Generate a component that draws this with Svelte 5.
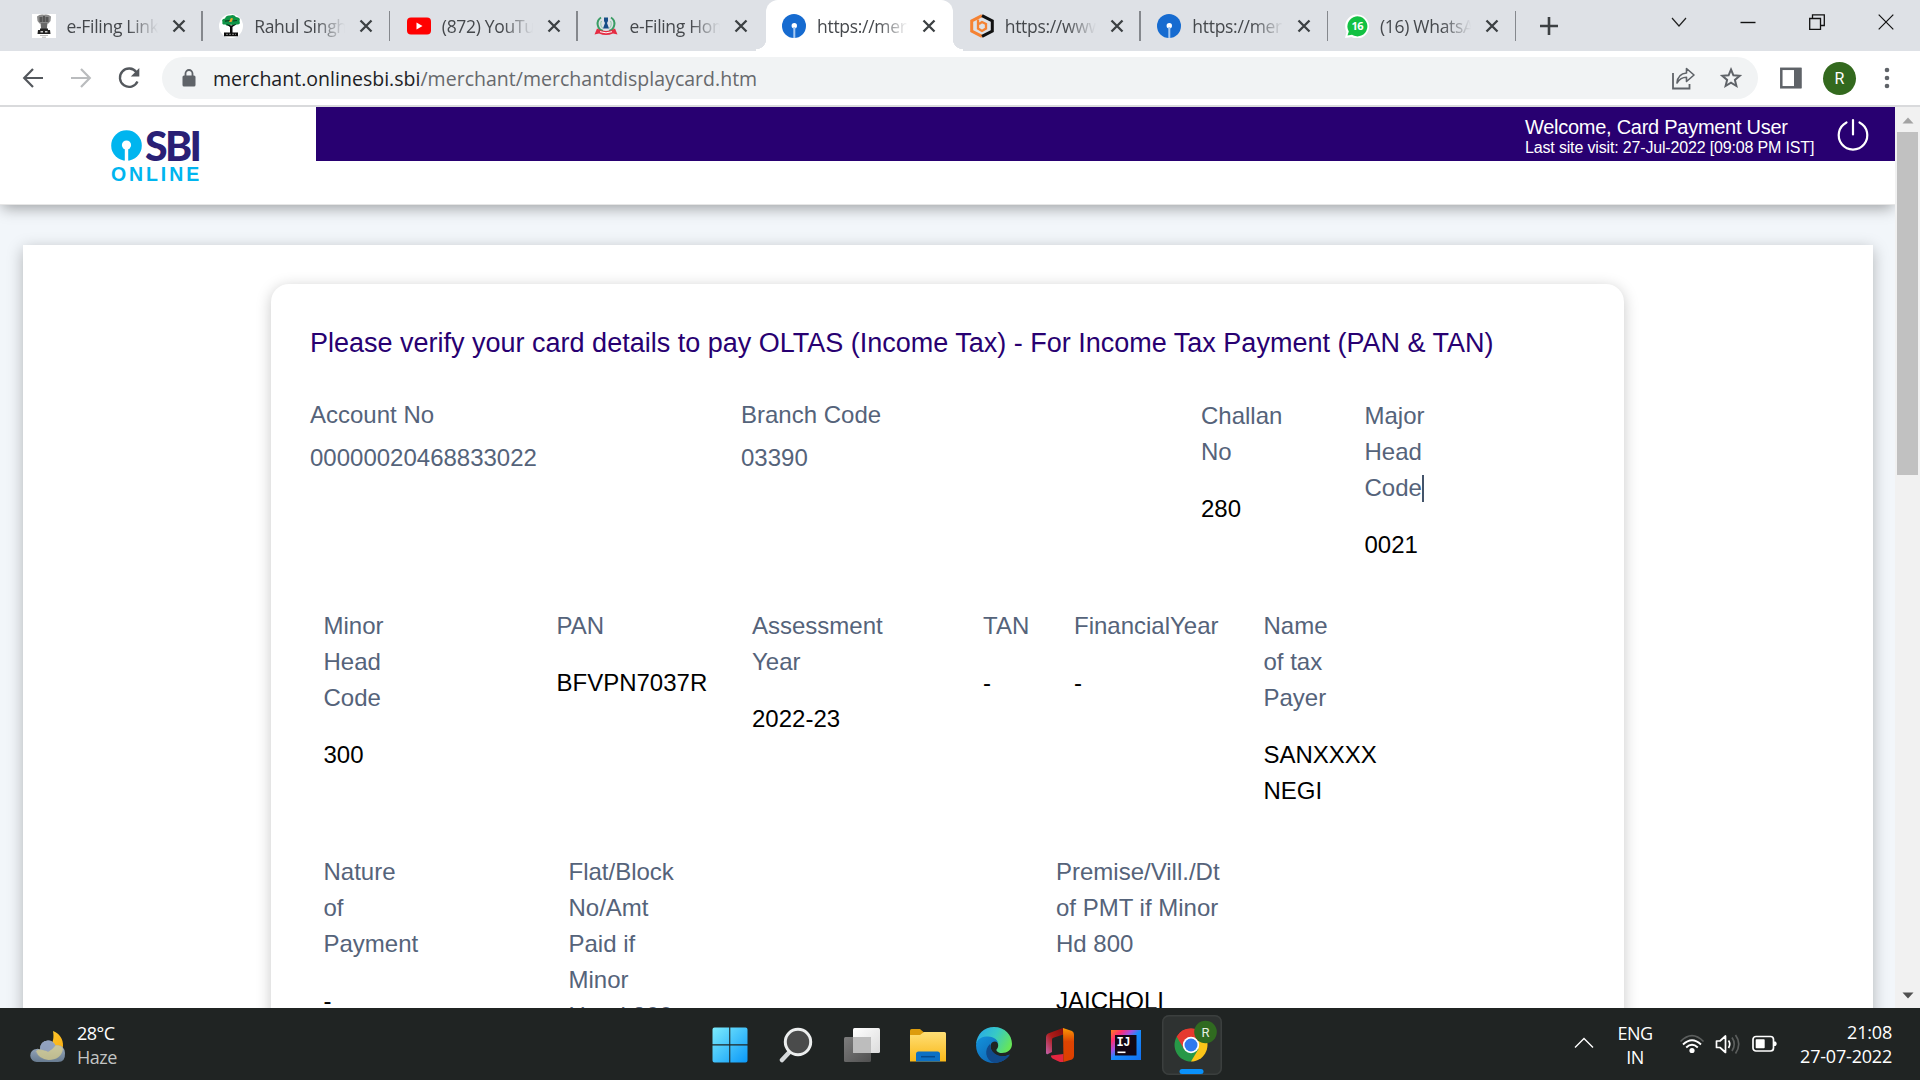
<script>
  const tabs = [
    { icon: 'emblem', title: 'e-Filing Link | In', sep: true },
    { icon: 'tree', title: 'Rahul Singh N', sep: true },
    { icon: 'youtube', title: '(872) YouTube', sep: true },
    { icon: 'tax', title: 'e-Filing Home', sep: true, hideSep: true },
    { icon: 'sbi', title: 'https://merchant', active: true },
    { icon: 'bd', title: 'https://www.bi', sep: true },
    { icon: 'sbi', title: 'https://merchant', sep: true },
    { icon: 'whatsapp', title: '(16) WhatsApp', sep: true }
  ];

  const rowTwo = [
    { label: ['Minor', 'Head', 'Code'], value: ['300'] },
    { label: ['PAN'], value: ['BFVPN7037R'] },
    { label: ['Assessment', 'Year'], value: ['2022-23'] },
    { label: ['TAN'], value: ['-'] },
    { label: ['FinancialYear'], value: ['-'] },
    { label: ['Name', 'of tax', 'Payer'], value: ['SANXXXX', 'NEGI'] }
  ];

  const rowThree = [
    { label: ['Nature', 'of', 'Payment'], value: ['-'] },
    { label: ['Flat/Block', 'No/Amt', 'Paid if', 'Minor', 'Head 800'], value: [] },
    { label: ['Premise/Vill./Dt', 'of PMT if Minor', 'Hd 800'], value: ['JAICHOLI'] }
  ];
</script>

{#snippet favicon(name)}
  <svg class="fav" width="24" height="24" viewBox="0 0 24 24">
    {#if name === 'emblem'}
      <rect width="24" height="24" fill="#fff" />
      <path d="M5 2.500Q8 0 12 .8Q16 0 19 2.500L18.500 7L16.500 9.500H7.500L5.500 7Z" fill="#8b8b8b" />
      <path d="M7.500 3h3v5h-3zM13.500 3h3v5h-3zM11 2h2v6h-2z" fill="#555" />
      <path d="M8.500 9h7l-.7 6h-5.600z" fill="#6a6a6a" />
      <path d="M8 14.500h8v1.500h2l.5 4H5.500l.5-4h2z" fill="#222" />
      <path d="M8.500 17h2.500v1.500H8.500zM13 17h2.500v1.500H13z" fill="#ccc" />
      <path d="M8 21.500h8M10 23.200h4" stroke="#bbb" stroke-width="1" />
    {:else if name === 'tree'}
      <circle cx="12" cy="12" r="12" fill="#fff" />
      <path d="M3.500 8Q2 5 6 4.500Q7 1 11 1.500Q15 0 17 3Q22 3.500 20.500 7Q22 11 17.500 10.500Q15 12.500 12 10.500Q8 13 6.500 10.500Q2.500 11 3.500 8Z" fill="#109447" />
      <path d="M6 7.200L11 6.500M14 7L18 6.500" stroke="#0b3a1e" stroke-width="1.200" />
      <path d="M10 8L12 4L14 4.500L12.500 8Z" fill="#f6a42b" />
      <path d="M7 10L11 13V18.500H5V22.300h14V18.500H13.500V13L17.500 10L12.300 11.500Z" fill="#0b0b0b" />
      <path d="M7 20.300h10" stroke="#888" stroke-width="1" stroke-dasharray="2 1" />
    {:else if name === 'youtube'}
      <rect x="0" y="3.500" width="24" height="17" rx="4" fill="#f00" />
      <path d="M9.500 8.500L15.500 12L9.500 15.500Z" fill="#fff" />
    {:else if name === 'tax'}
      <path d="M7 3.500C1.500 7 3 15 9 17M17 3.500C22.500 7 21 15 15 17" fill="none" stroke="#3a9c64" stroke-width="2" />
      <path d="M7.500 7C6 10 7 13 9 14.500M16.500 7C18 10 17 13 15 14.500" fill="none" stroke="#8cc9a6" stroke-width="1" />
      <path d="M10 3.500h4v3.500l-1 2l2 5.500H9l2-5.500l-1-2z" fill="#174e87" />
      <path d="M3 14.500Q12 19.500 21 14.500L23.500 20.500L19 19.500Q12 22.500 5 19.500L.5 20.500Z" fill="#e52c43" />
      <path d="M6 17.700Q12 20 18 17.700" fill="none" stroke="#fff" stroke-width="1" />
    {:else if name === 'sbi'}
      <circle cx="12" cy="12" r="12" fill="#166bd0" />
      <circle cx="12.300" cy="11.800" r="2.700" fill="#fff" />
      <path d="M11.300 13h2v11h-2z" fill="#a8caf2" />
    {:else if name === 'bd'}
      <path d="M12 1.600L1.700 6.800V17.200L12 22.400" fill="none" stroke="#f58233" stroke-width="3" />
      <path d="M12 1.600L22.300 6.800V17.200L12 22.400" fill="none" stroke="#111" stroke-width="3" />
      <path d="M8 5.500V14.500L12 17L16 14.500V10L12 8L9 10" fill="none" stroke="#f58233" stroke-width="2.300" />
    {:else if name === 'whatsapp'}
      <path d="M0 24L1.500 18A12 12 0 1 1 6.500 23Z" fill="#fff" />
      <path d="M2.500 21.500L3.800 17.500A10 10 0 1 1 7 20.800Z" fill="#12c143" />
      <text x="12.300" y="16" text-anchor="middle" class="wa">16</text>
    {/if}
  </svg>
{/snippet}

{#snippet field(f)}
  <div class="field">
    <div class="label">{#each f.label as line}<div>{line}</div>{/each}</div>
    <div class="value">{#each f.value as line}<div>{line}</div>{/each}</div>
  </div>
{/snippet}

<div class="screen">
  <div class="tabstrip">
    {#each tabs as t}
      <div class="tab" class:active={t.active} class:sep={t.sep && !t.hideSep}>
        {@render favicon(t.icon)}
        <span class="tab-title">{t.title}</span>
        <svg class="x" width="14" height="14" viewBox="0 0 14 14"><path d="M1.500 1.500L12.500 12.500M12.500 1.500L1.500 12.500" stroke="#3c4043" stroke-width="2.300" /></svg>
      </div>
    {/each}
    <svg class="plus" width="20" height="20" viewBox="0 0 20 20"><path d="M10 1V19M1 10H19" stroke="#3c4043" stroke-width="2.600" /></svg>
    <div class="winbtns">
      <svg width="16" height="16" viewBox="0 0 16 16"><path d="M1 4L8 12L15 4" fill="none" stroke="#222" stroke-width="1.200" /></svg>
      <svg width="16" height="16" viewBox="0 0 16 16"><path d="M.5 8.500H15.500" stroke="#111" stroke-width="1.400" /></svg>
      <svg width="16" height="16" viewBox="0 0 16 16"><path d="M.7 4.500H11.500V15.300H.7ZM3.500 4.500V.8H15.300V11.500H11.500" fill="none" stroke="#111" stroke-width="1.300" /></svg>
      <svg width="16" height="16" viewBox="0 0 16 16"><path d="M.7 .7L15.300 15.300M15.300 .7L.7 15.300" stroke="#111" stroke-width="1.200" /></svg>
    </div>
  </div>

  <div class="toolbar">
    <div class="nav">
      <svg width="24" height="24" viewBox="0 0 24 24"><path d="M22 12H4M12 3L3.200 12L12 21" fill="none" stroke="#54585d" stroke-width="2.200" /></svg>
      <svg width="24" height="24" viewBox="0 0 24 24"><path d="M2 12H20M12 3L20.800 12L12 21" fill="none" stroke="#babcbe" stroke-width="2.200" /></svg>
      <svg width="24" height="24" viewBox="0 0 24 24"><path d="M19.500 6.200A9.200 9.200 0 1 0 20.500 15.500" fill="none" stroke="#54585d" stroke-width="2.300" /><path d="M22.300 2V10.500H13.800Z" fill="#54585d" /></svg>
    </div>
    <div class="omnibox">
      <svg width="14" height="18" viewBox="0 0 14 18"><path d="M3.500 8V4.500a3.500 3.500 0 0 1 7 0V8" fill="none" stroke="#5f6368" stroke-width="1.800" /><rect x="0.500" y="6.500" width="13" height="11" rx="1.500" fill="#5f6368" /></svg>
      <span class="url"><b>merchant.onlinesbi.sbi</b>/merchant/merchantdisplaycard.htm</span>
      <div class="omni-icons">
        <svg width="24" height="24" viewBox="0 0 24 24"><path d="M2 7V22.500H18.500V18" fill="none" stroke="#5f6368" stroke-width="1.800" /><path d="M6 17C6.500 10.500 10 7.500 15.500 7V2.500L23 9L15.500 15.500V11.300C11 11.300 8.500 13 6 17Z" fill="none" stroke="#5f6368" stroke-width="1.600" stroke-linejoin="round" /></svg>
        <svg width="24" height="24" viewBox="0 0 24 24"><path d="M12 3.500L14.400 9.300L20.700 9.800L15.900 13.900L17.400 20L12 16.700L6.600 20L8.100 13.900L3.300 9.800L9.600 9.300Z" fill="none" stroke="#5f6368" stroke-width="2" /></svg>
      </div>
    </div>
    <svg class="side" width="22" height="22" viewBox="0 0 22 22"><rect x="1.300" y="1.800" width="19" height="18.500" fill="none" stroke="#5f6368" stroke-width="2.500" /><rect x="14" y="1" width="7.500" height="20" fill="#5f6368" /></svg>
    <div class="avatar">R</div>
    <svg class="dots" width="6" height="22" viewBox="0 0 6 22"><circle cx="3" cy="3" r="2.300" fill="#5f6368" /><circle cx="3" cy="11" r="2.300" fill="#5f6368" /><circle cx="3" cy="19" r="2.300" fill="#5f6368" /></svg>
  </div>

  <div class="viewport">
    <div class="page">
      <header>
        <div class="logo">
          <div class="logo-top">
            <svg width="31" height="31" viewBox="0 0 31 31"><circle cx="15.500" cy="15.500" r="15.300" fill="#00b5ef" /><circle cx="15.500" cy="15" r="4.600" fill="#fff" /><rect x="13.800" y="17" width="3.400" height="14" fill="#fff" /></svg>
            <span class="sbi">SBI</span>
          </div>
          <span class="online">ONLINE</span>
        </div>
        <div class="band">
          <div class="user">
            <div class="welcome">Welcome, Card Payment User</div>
            <div class="last">Last site visit: 27-Jul-2022 [09:08 PM IST]</div>
          </div>
          <svg width="34" height="34" viewBox="0 0 34 34"><path d="M10.500 4.500A14.300 14.300 0 1 0 23.500 4.500" fill="none" stroke="#fff" stroke-width="2.200" stroke-linecap="round" /><path d="M17 2V16.500" stroke="#fff" stroke-width="2.200" stroke-linecap="round" /></svg>
        </div>
      </header>
      <main>
        <section class="card">
          <h1>Please verify your card details to pay OLTAS (Income Tax) - For Income Tax Payment (PAN &amp; TAN)</h1>
          <div class="row one">
            <div class="plain"><div>Account No</div><div>00000020468833022</div></div>
            <div class="plain"><div>Branch Code</div><div>03390</div></div>
            {@render field({ label: ['Challan', 'No'], value: ['280'] })}
            <div class="field">
              <div class="label"><div>Major</div><div>Head</div><div class="caret-line">Code<i></i></div></div>
              <div class="value">0021</div>
            </div>
          </div>
          <div class="row two">{#each rowTwo as f}{@render field(f)}{/each}</div>
          <div class="row three">{#each rowThree as f}{@render field(f)}{/each}</div>
        </section>
      </main>
    </div>
    <div class="scrollbar">
      <svg width="12" height="7" viewBox="0 0 12 7"><path d="M6 .5L11.500 6.500H.5Z" fill="#a3a3a3" /></svg>
      <div class="thumb"></div>
      <svg class="down" width="12" height="7" viewBox="0 0 12 7"><path d="M6 6.500L11.500 .5H.5Z" fill="#505050" /></svg>
    </div>
  </div>

  <div class="taskbar">
    <div class="weather">
      <svg width="36" height="34" viewBox="0 0 36 34">
        <defs>
          <linearGradient id="cl" x1="0" y1="0" x2="0" y2="1"><stop offset="0" stop-color="#b5c5dc" /><stop offset="1" stop-color="#6d8298" /></linearGradient>
          <linearGradient id="mn" x1="0" y1="0" x2="1" y2="1"><stop offset="0" stop-color="#ffd43a" /><stop offset="1" stop-color="#f9a60a" /></linearGradient>
        </defs>
        <path d="M23 1C29 3 33.500 9 33 16C32 25 25 30 18 30C12 30 7 26 5 21C14 24 26 17 23 1Z" fill="url(#mn)" />
        <path d="M7 32A6.500 6.500 0 0 1 6.500 19Q8 18.500 10 19.500Q10 11 18 10.500Q23 10.500 25.500 15.500Q34 14 35 23Q35.500 32 28 32Z" fill="url(#cl)" opacity=".93" />
        <path d="M6 21Q9 18 13 20Q20 23 25 15.500Q31 15 33 19Q31 30 18.500 30Q9 29 6 21Z" fill="#d9ce8d" opacity=".7" />
        <path d="M10 19.500Q10 11 18 10.500Q23 10.500 25.500 15.500Q22 20 18 22Q14 18.500 10 19.500Z" fill="#8e9fbd" opacity=".85" />
      </svg>
      <div class="wtext"><div>28°C</div><div class="dim">Haze</div></div>
    </div>

    <div class="apps">
      <div class="app"><svg width="36" height="36" viewBox="0 0 36 36">
        <defs><linearGradient id="wn" x1="0" y1="0" x2="1" y2="1"><stop offset="0" stop-color="#7cecfd" /><stop offset="1" stop-color="#0a98f8" /></linearGradient></defs>
        <path d="M2.500 .5H17.200V17.200H.5V2.500Q.5 .5 2.500 .5ZM18.300 .5H33.500Q35.500 .5 35.500 2.500V17.200H18.300ZM.5 18.600H17.200V35.500H2.500Q.5 35.500 .5 33.500ZM18.300 18.600H35.500V33.500Q35.500 35.500 33.500 35.500H18.300Z" fill="url(#wn)" /></svg></div>
      <div class="app"><svg width="36" height="36" viewBox="0 0 36 36"><path d="M11.500 25L4 33" stroke="#d5d8da" stroke-width="4.500" stroke-linecap="round" /><circle cx="20" cy="15" r="12.700" fill="#4a4b4b" stroke="#eceeee" stroke-width="3" /></svg></div>
      <div class="app"><svg width="36" height="36" viewBox="0 0 36 36">
        <defs><linearGradient id="tv" x1="0" y1="0" x2="1" y2="1"><stop offset="0" stop-color="#fff" /><stop offset="1" stop-color="#dcdcdc" /></linearGradient><linearGradient id="tg" x1="0" y1="0" x2="1" y2="1"><stop offset="0" stop-color="#7d7d7d" /><stop offset="1" stop-color="#505050" /></linearGradient></defs>
        <rect x="0" y="10" width="27" height="25" rx="1.500" fill="url(#tg)" /><rect x="9" y="1" width="27" height="25" rx="1.500" fill="url(#tv)" /><path d="M9 10H27V26H10.500Q9 26 9 24.500Z" fill="#bdbdbd" /></svg></div>
      <div class="app"><svg width="36" height="36" viewBox="0 0 36 36">
        <defs><linearGradient id="fo" x1="0" y1="0" x2="0" y2="1"><stop offset="0" stop-color="#ffdf76" /><stop offset="1" stop-color="#f9b818" /></linearGradient></defs>
        <path d="M1.500 2H10L14 5.500V12H0V3.500Q0 2 1.500 2Z" fill="#dd9c0d" /><path d="M0 8H10L14 5H34.500Q36 5 36 6.500V34.500H0Z" fill="url(#fo)" /><path d="M6 34.500V27Q6 24.500 8.500 24.500H27.500Q30 24.500 30 27V34.500Z" fill="#0d71c4" /><path d="M11 29.700H25" stroke="#064a8c" stroke-width="1.500" /></svg></div>
      <div class="app"><svg width="36" height="36" viewBox="0 0 36 36">
        <defs><linearGradient id="e1" x1="0" y1=".2" x2="1" y2=".6"><stop offset="0" stop-color="#27a9ea" /><stop offset=".5" stop-color="#37c9c6" /><stop offset="1" stop-color="#67e657" /></linearGradient><linearGradient id="e2" x1="0" y1="0" x2="1" y2="1"><stop offset="0" stop-color="#1393dc" /><stop offset="1" stop-color="#0e59a8" /></linearGradient></defs>
        <path d="M0 17C1 7 8 0 18 0C29 0 36 8 36 17C36 23 31 26 26 26C22 26 20 24 20.500 22.500C22 21 22.500 19 22 17C20 9 8 8 0 17Z" fill="url(#e1)" />
        <path d="M0 18C1 11 7 9.500 12 9.500C18 9.500 22.500 13.500 22.500 18C22.500 15 19 13.500 16 15.500C13 18 14 27 24 29.500C29 30 32 28 33.500 27.500C31 32 25 36 18 36C8 36 0 29 0 18Z" fill="url(#e2)" />
        <path d="M14 17C8 22 9 33 18 36C25 36 31 32 34 27.500C29 30.500 20 29.500 16.500 24.500C15 22 14 20 14 17Z" fill="#114a8b" /></svg></div>
      <div class="app"><svg width="36" height="36" viewBox="0 0 36 36">
        <defs><linearGradient id="of" x1="0" y1="1" x2="1" y2="0"><stop offset="0" stop-color="#c563ae" /><stop offset=".5" stop-color="#ad1c18" /><stop offset="1" stop-color="#840d0d" /></linearGradient><linearGradient id="og" x1="0" y1="0" x2="0" y2="1"><stop offset="0" stop-color="#fb9905" /><stop offset=".4" stop-color="#dd4402" /><stop offset="1" stop-color="#dd3f00" /></linearGradient></defs>
        <path d="M21 1L6 6.500Q4 7.500 4 10V25.500Q4 28 6 27L10 25V12.500Q10 11 12 10.500L21.500 7.500Z" fill="url(#of)" /><path d="M9 28.500L21.500 27V35L18 35Q15 33.500 10.500 31.500Q8.500 30 9 28.500Z" fill="#e42640" /><path d="M21 1L30 4Q32 5 32 7.500V29Q32 31.500 30 32.500L21.500 35Z" fill="url(#og)" /></svg></div>
      <div class="app"><svg width="36" height="36" viewBox="0 0 36 36">
        <defs><linearGradient id="ij" x1="0" y1="0" x2="1" y2="1"><stop offset="0" stop-color="#fc801d" /><stop offset=".2" stop-color="#fe2d72" /><stop offset=".36" stop-color="#a64fe0" /><stop offset=".5" stop-color="#188cfb" /><stop offset="1" stop-color="#136ff0" /></linearGradient></defs>
        <rect x="3" y="3" width="30" height="30" fill="url(#ij)" /><rect x="7" y="8" width="21.500" height="20.500" fill="#120714" /><text x="8.500" y="18.500" class="ijt">IJ</text><path d="M9.500 25.300H17.500" stroke="#fff" stroke-width="1.600" /></svg></div>
      <div class="app chrome"><svg width="60" height="60" viewBox="0 0 60 60">
        <path d="M29 30L14.700 21.800A16.500 16.500 0 0 1 43.300 21.800L36 25Z" fill="#e53a2f" />
        <path d="M29 30L43.300 21.800A16.500 16.500 0 0 1 29 46.500L27 40Z" fill="#fcc519" />
        <path d="M29 30L36.500 34L29 46.500A16.500 16.500 0 0 1 14.700 21.800L20 24Z" fill="#279847" />
        <path d="M29 22H43.400A16.500 16.500 0 0 0 14.700 21.800L22 34Z" fill="#e53a2f" />
        <circle cx="29" cy="30" r="8.200" fill="#fff" /><circle cx="29" cy="30" r="6.500" fill="#3079ee" />
        <circle cx="43.500" cy="17" r="11.300" fill="#306a20" /><text x="43.500" y="21.700" text-anchor="middle" class="rt">R</text>
        <rect x="17.500" y="54" width="24" height="5" rx="2.500" fill="#0a91fa" /></svg></div>
    </div>

    <div class="tray">
      <svg class="chev" width="20" height="12" viewBox="0 0 20 12"><path d="M1 10.500L10 1.500L19 10.500" fill="none" stroke="#fff" stroke-width="1.400" /></svg>
      <div class="lang"><div>ENG</div><div>IN</div></div>
      <svg class="wifi" width="26" height="22" viewBox="0 0 26 22"><path d="M1.500 8.500Q13 -3 24.500 8.500" fill="none" stroke="#5b5e5d" stroke-width="1.700" /><path d="M4 11.500Q13 3 22 11.500M7.200 14.500Q13 9 18.800 14.500" fill="none" stroke="#fff" stroke-width="1.900" /><circle cx="13" cy="17.500" r="2.600" fill="#fff" /></svg>
      <svg class="spk" width="26" height="22" viewBox="0 0 26 22"><path d="M1.500 8H5L10.500 3V19.500L5 14.500H1.500Z" fill="none" stroke="#fff" stroke-width="1.700" stroke-linejoin="round" /><path d="M13.500 7.500Q16 11 13.500 15" fill="none" stroke="#fff" stroke-width="1.700" /><path d="M17 4.500Q21.500 11 17 18M20.500 2Q27 11 20.500 20.500" fill="none" stroke="#5b5e5d" stroke-width="1.700" /></svg>
      <svg class="bat" width="26" height="18" viewBox="0 0 26 18"><rect x="1" y="1.500" width="20.500" height="14.500" rx="3" fill="none" stroke="#fff" stroke-width="1.700" /><rect x="3.700" y="4.300" width="9" height="9" rx=".8" fill="#fff" /><path d="M22 6.500H23.500Q24.700 7.500 24.700 8.800Q24.700 10 23.500 11H22Z" fill="#fff" /></svg>
      <div class="clock"><div>21:08</div><div>27-07-2022</div></div>
    </div>
  </div>
</div>

<style>
  :global(body) { margin: 0; overflow: hidden; }
  * { box-sizing: border-box; }
  .screen { width: 1920px; height: 1080px; overflow: hidden; display: flex; flex-direction: column; font-family: "Liberation Sans", Arial, sans-serif; background: #fff; }
  svg { display: block; flex: none; }

  .tabstrip { flex: none; height: 51px; background: #dee1e6; display: flex; align-items: center; padding-left: 15px; }
  .tab { position: relative; width: 187.650px; height: 51px; display: flex; align-items: center; padding-left: 16.500px; flex: none; }
  .tab.active { background: #fff; border-radius: 12px 12px 0 0; }
  .tab.active::before, .tab.active::after { content: ""; position: absolute; bottom: 0; width: 10px; height: 12px; }
  .tab.active::before { left: -10px; background: radial-gradient(circle at 0 0, transparent 10px, #fff 10.500px); }
  .tab.active::after { right: -10px; background: radial-gradient(circle at 100% 0, transparent 10px, #fff 10.500px); }
  .tab.sep::after { content: ""; position: absolute; right: 0; top: 11px; width: 1.500px; height: 30px; background: #85888d; }
  .tab-title { margin-left: 11px; width: 93px; overflow: hidden; white-space: nowrap; font: 17.500px/26px "Open Sans", "Noto Sans", sans-serif; letter-spacing: -0.300px; color: #45484c; -webkit-mask-image: linear-gradient(90deg, #000 66%, transparent 98%); mask-image: linear-gradient(90deg, #000 66%, transparent 98%); }
  .x { margin-left: 12px; }
  .wa { font: bold 11px "Open Sans", sans-serif; fill: #fff; letter-spacing: -0.500px; }
  .plus { margin-left: 23px; }
  .winbtns { margin-left: auto; display: flex; gap: 53px; padding-right: 26px; padding-bottom: 8px; }

  .toolbar { flex: none; height: 56px; border-bottom: 2px solid #d9dadc; display: flex; align-items: center; padding-left: 21px; background: #fff; }
  .nav { display: flex; gap: 24px; width: 141px; }
  .omnibox { width: 1596px; height: 42px; border-radius: 21px; background: #f1f3f4; display: flex; align-items: center; padding: 0 15px 0 20px; }
  .url { margin-left: 17px; padding-top: 1px; font: 19.500px/28px "Open Sans", "Noto Sans", sans-serif; letter-spacing: 0.020px; color: #67696c; white-space: nowrap; }
  .url b { font-weight: 400; color: #202124; }
  .omni-icons { margin-left: auto; display: flex; gap: 24px; }
  .side { margin-left: 22px; }
  .avatar { margin-left: 21px; width: 33px; height: 33px; border-radius: 50%; background: #33691e; color: #fff; font: 16px/33px Roboto, sans-serif; text-align: center; }
  .dots { margin-left: 28px; }

  .viewport { flex: none; height: 901px; display: flex; overflow: hidden; }
  .page { width: 1895px; background: #f2f6fa; display: flex; flex-direction: column; overflow: hidden; }
  header { flex: none; height: 98px; background: #fff; display: flex; justify-content: space-between; position: relative; z-index: 1; border-bottom: 1px solid #e6e6e6; box-shadow: 0 5px 14px -2px rgba(0, 0, 0, .36); }
  .logo { padding: 23px 0 0 111px; }
  .logo-top { display: flex; gap: 3px; height: 31px; }
  .sbi { font: bold 41px/31px Lato, sans-serif; font-weight: 900; color: #292075; letter-spacing: -2.700px; }
  .online { display: block; margin-top: 2px; font: bold 19.500px/22px "Liberation Sans", sans-serif; color: #00b5ef; letter-spacing: 2.900px; }
  .band { width: 1579px; height: 54px; background: #280071; display: flex; color: #fff; }
  .user { margin-left: auto; width: 310px; padding-top: 8px; white-space: nowrap; }
  .welcome { font-size: 20px; line-height: 24px; letter-spacing: -0.270px; }
  .last { font-size: 16px; line-height: 17px; letter-spacing: -0.160px; }
  .band svg { margin: 11px 25px 0 1px; }

  main { flex: none; margin: 40px 22px 0 23px; height: 1000px; padding: 39px 249px 0 248px; background: #fff; box-shadow: 0 4px 15px rgba(0, 0, 0, .27); }
  .card { height: 1000px; border-radius: 18px; background: #fff; box-shadow: 0 3px 15px rgba(0, 0, 0, .22); padding: 0 39px; }
  h1 { margin: 0; padding-top: 41px; font-weight: 400; font-size: 27px; line-height: 36px; color: #280071; white-space: nowrap; }
  .row { display: grid; font-size: 24px; line-height: 36px; color: #55637a; white-space: nowrap; }
  .row.one { margin-top: 36px; height: 210px; grid-template-columns: 431px 460px 163.500px 1fr; }
  .row.two { margin-left: 13.500px; height: 246px; grid-template-columns: 233px 195.500px 231px 91px 189.500px 1fr; }
  .row.three { margin-left: 13.500px; grid-template-columns: 245px 487.500px 1fr; }
  .plain div + div { margin-top: 7px; }
  .field { padding-top: 1px; }
  .value { margin-top: 21px; color: #000; }
  .caret-line { display: flex; align-items: center; }
  .caret-line i { width: 2px; height: 27px; background: #44546a; }

  .scrollbar { width: 25px; background: #f1f1f1; display: flex; flex-direction: column; align-items: center; padding: 10px 0 9px; }
  .thumb { margin-top: 8px; width: 21px; height: 343px; background: #c1c1c1; }
  .down { margin-top: auto; }

  .taskbar { flex: none; height: 72px; background: #202423; display: grid; grid-template-columns: 697px 528px 1fr; color: #fff; font: 18px/24px "Open Sans", "Noto Sans", sans-serif; }
  .weather { display: flex; padding-left: 30px; }
  .weather svg { margin-top: 22px; }
  .wtext { margin: 13px 0 0 11px; letter-spacing: -0.500px; }
  .dim { color: #c3c5c4; }
  .apps { display: flex; }
  .app { width: 66px; height: 74px; display: flex; align-items: center; justify-content: center; }
  .chrome svg { background: #2e3231; border-radius: 7px; box-shadow: inset 0 0 0 1.500px #3b3f3e; }
  .ijt { font: bold 12px "Liberation Mono", monospace; fill: #fff; letter-spacing: -0.500px; }
  .rt { font: 13px Roboto, sans-serif; fill: #e7f0e3; }
  .tray { display: flex; padding-left: 349px; }
  .chev { margin-top: 29px; }
  .lang { width: 50px; margin: 13px 0 0 16px; text-align: center; letter-spacing: -0.500px; }
  .wifi { margin: 25px 0 0 19px; }
  .spk { margin: 25px 0 0 10px; }
  .bat { margin: 27px 0 0 11px; }
  .clock { flex: 1; margin: 12px 28px 0 0; text-align: right; letter-spacing: -0.200px; }
</style>
